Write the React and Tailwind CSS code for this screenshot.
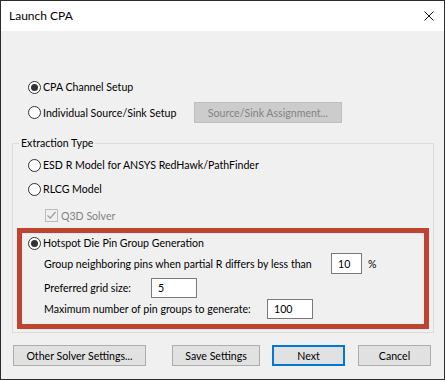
const Radio = ({ checked }) => (
  <span className="w-[13px] h-[13px] shrink-0 rounded-full border border-[#333] bg-white flex items-center justify-center">
    {checked && <span className="w-[7px] h-[7px] rounded-full bg-[#333]" />}
  </span>
);

const Field = ({ value, width }) => (
  <div className={`${width} h-full shrink-0 border border-[#7a7a7a] bg-white px-[6px] flex items-center`}>
    {value}
  </div>
);

const Button = ({ children, width, primary }) => (
  <button
    className={`${width} h-[21px] flex items-center justify-center bg-[#e1e1e1] ${
      primary ? "border-2 border-[#0078d7]" : "border border-[#adadad]"
    }`}
  >
    {children}
  </button>
);

export default function App() {
  return (
    <div className="w-[445px] h-[380px] border border-[#2b2b2b] bg-[#f0f0f0] flex flex-col whitespace-nowrap font-['Lato',sans-serif] text-[10.6px] leading-[16px] text-black">
      <div className="h-[30px] bg-white flex items-center justify-between pl-[8px] pr-[10px] shrink-0">
        <span className="text-[12px]">Launch CPA</span>
        <svg width="10" height="10" viewBox="0 0 10 10">
          <path d="M0.5 0.5 L9.5 9.5 M9.5 0.5 L0.5 9.5" stroke="#111" strokeWidth="1" />
        </svg>
      </div>

      <div className="flex flex-col">
        <div className="h-[20px] mt-[46px] ml-[27px] flex items-center gap-[2px]">
          <Radio checked />
          <span>CPA Channel Setup</span>
        </div>
        <div className="h-[21px] mt-[5px] ml-[27px] flex items-center">
          <div className="w-[166px] flex items-center gap-[2px]">
            <Radio />
            <span>Individual Source/Sink Setup</span>
          </div>
          <div className="w-[148px] h-full bg-[#cccccc] border border-[#bfbfbf] text-[#838383] flex items-center justify-center">
            Source/Sink Assignment...
          </div>
        </div>

        <fieldset className="mt-[12px] ml-[11px] w-[422px] border border-[#dcdcdc] pb-[3px]">
          <legend className="ml-[6px] px-[2px]">Extraction Type</legend>
          <div className="h-[24px] mt-[2px] pl-[15px] flex items-center gap-[2px]">
            <Radio />
            <span>ESD R Model for ANSYS RedHawk/PathFinder</span>
          </div>
          <div className="h-[24px] pl-[15px] flex items-center gap-[2px]">
            <Radio />
            <span>RLCG Model</span>
          </div>
          <div className="h-[27px] pt-[2px] pl-[32px] flex items-center gap-[3px] text-[#838383]">
            <span className="w-[13px] h-[13px] border border-[#bcbcbc] bg-[#f0f0f0] flex items-center justify-center">
              <svg width="11" height="11" viewBox="0 0 11 11">
                <path d="M1.5 5.5 L4.2 8.2 L9.5 2" fill="none" stroke="#9a9a9a" strokeWidth="1.2" />
              </svg>
            </span>
            <span>Q3D Solver</span>
          </div>

          <div className="mx-[4px] h-[101px] border-[5px] border-[#c0432f] flex flex-col">
            <div className="h-[20px] pl-[6px] flex items-center gap-[2px]">
              <Radio checked />
              <span>Hotspot Die Pin Group Generation</span>
            </div>
            <div className="h-[21px] pl-[22px] flex items-center">
              <span className="w-[287px] shrink-0">Group neighboring pins when partial R differs by less than</span>
              <Field value="10" width="w-[31px]" />
              <span className="ml-[6px]">%</span>
            </div>
            <div className="h-[20px] mt-[4px] pl-[22px] flex items-center">
              <span className="w-[107px] shrink-0">Preferred grid size:</span>
              <Field value="5" width="w-[46px]" />
            </div>
            <div className="h-[20px] mt-[1px] pl-[22px] flex items-center">
              <span className="w-[223px] shrink-0">Maximum number of pin groups to generate:</span>
              <Field value="100" width="w-[46px]" />
            </div>
          </div>
        </fieldset>

        <div className="mt-[12px] pl-[12px] flex items-center">
          <Button width="w-[133px]">Other Solver Settings...</Button>
          <div className="ml-[26px]">
            <Button width="w-[88px]">Save Settings</Button>
          </div>
          <div className="ml-[12px]">
            <Button width="w-[73px]" primary>Next</Button>
          </div>
          <div className="ml-[13px]">
            <Button width="w-[73px]">Cancel</Button>
          </div>
        </div>
      </div>
    </div>
  );
}
